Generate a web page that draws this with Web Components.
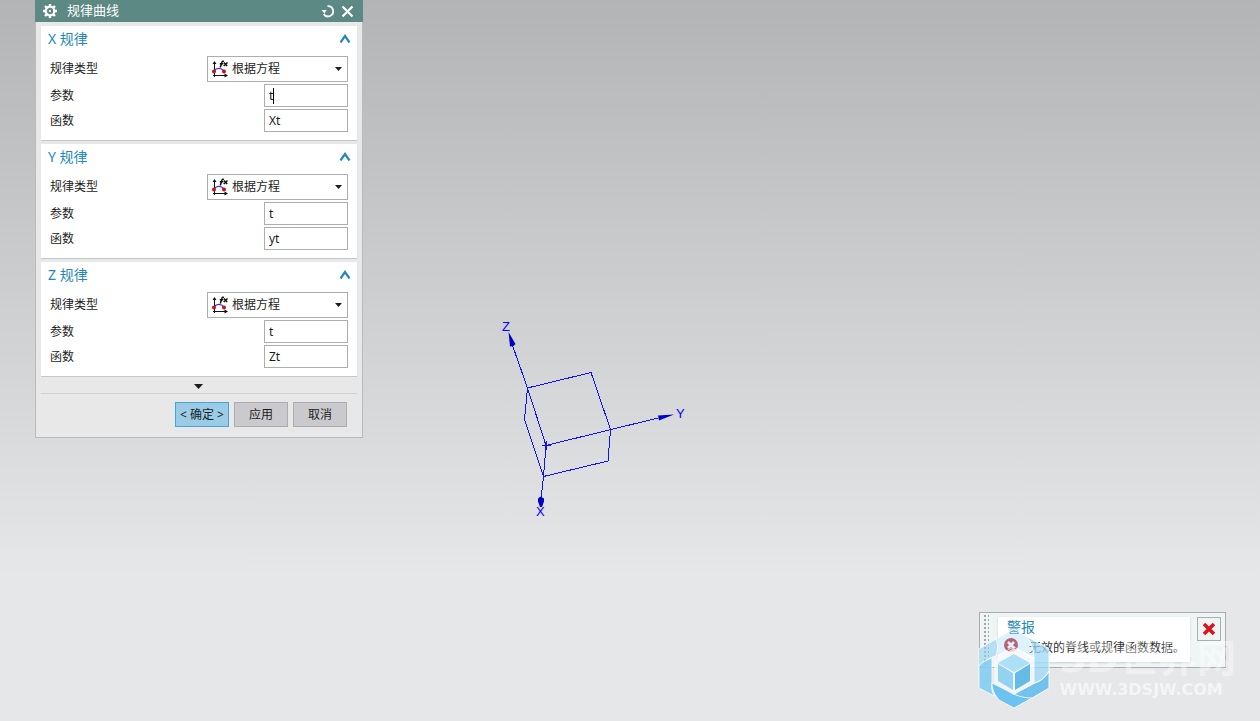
<!DOCTYPE html>
<html lang="zh-CN">
<head>
<meta charset="utf-8">
<title>规律曲线</title>
<style>
html, body { margin: 0; height: 100%; }
body { font: 12px/16px "Noto Sans", "Noto Sans CJK SC", sans-serif; color: #1c1c1c; overflow: hidden; }
</style>
</head>
<body>
<cad-viewport>
  <law-dialog heading="规律曲线">
    <law-section axis="X" variable="t" expression="Xt" active></law-section>
    <law-section axis="Y" variable="t" expression="yt"></law-section>
    <law-section axis="Z" variable="t" expression="Zt"></law-section>
  </law-dialog>
  <datum-axes></datum-axes>
  <alert-toast heading="警报">无效的脊线或规律函数数据。</alert-toast>
  <site-watermark></site-watermark>
</cad-viewport>
<script>
const make = (name, html, setup) => {
  const t = document.createElement('template');
  t.innerHTML = html;
  customElements.define(name, class extends HTMLElement {
    connectedCallback() {
      if (this.shadowRoot) return;
      const root = this.attachShadow({ mode: 'open' });
      root.append(t.content.cloneNode(true));
      if (setup) setup(this, root);
    }
  });
};

make('cad-viewport', `
<style>
:host { display: block; position: relative; width: 100%; height: 100%; overflow: hidden;
  background: linear-gradient(#b3b4b5 0%, #e6e7e9 80%, #e6e7e9 100%); }
::slotted(*) { position: absolute; }
::slotted(law-dialog) { left: 35px; top: 0; }
::slotted(datum-axes) { left: 490px; top: 310px; }
::slotted(alert-toast) { right: 34px; bottom: 53px; }
::slotted(site-watermark) { right: 24px; bottom: 12px; }
</style><slot></slot>`);

make('law-dialog', `
<style>
:host { display: block; width: 328px; box-sizing: border-box; background: #e8e8e8;
  border: 1px solid #b9babb; border-top: 0; }
header { display: flex; align-items: center; height: 22px; margin: 0 -1px; padding: 0 8px; background: #5c8984; color: #fff; }
h1 { flex: 1; margin: 0 0 2px 10px; font: inherit; font-size: 13px; line-height: 20px; }
header button { border: 0; padding: 0; background: none; width: 14px; height: 14px; margin-left: 6px; }
svg { display: block; }
.body { display: flex; flex-direction: column; gap: 3px; padding: 4px 5px 0; }
.more { display: flex; justify-content: center; align-items: flex-end; height: 16px; margin: 0 5px; border-bottom: 1px solid #d2d2d3; }
.more button { border: 0; padding: 0 2px 4px 0; background: none; }
footer { display: flex; justify-content: flex-end; gap: 5px; padding: 8px 15px 10px; }
footer button { box-sizing: border-box; width: 54px; height: 25px; padding: 0; border: 1px solid #adadaf; background: #cacace; font: inherit; color: inherit; white-space: nowrap; }
footer .ok { border-color: #4aa3d3; background: #9acce7; }
</style>
<header>
  <svg width="14" height="14" viewBox="0 0 14 14"><circle cx="7" cy="7" r="4.3" fill="none" stroke="#fff" stroke-width="2.2"/><path d="M7 0v2.5M7 11.5v2.5M0 7h2.5M11.5 7h2.5M2 2l1.7 1.7M10.3 10.3l1.7 1.7M12 2l-1.7 1.7M3.7 10.3l-1.7 1.700" stroke="#fff" stroke-width="2.4"/><circle cx="7" cy="7" r="1.1" fill="#fff"/></svg>
  <h1></h1>
  <button aria-label="重置"><svg width="14" height="14" viewBox="0 0 14 14"><path d="M7 2.200A5.100 5.100 0 1 1 2.400 9.500" fill="none" stroke="#fff" stroke-width="1.800" transform="rotate(-6 7 7)"/><path d="M0.500 6h5.500v-0.500l-2.500 4z" fill="#fff"/></svg></button>
  <button aria-label="关闭"><svg width="14" height="14" viewBox="0 0 14 14"><path d="M1.500 2.500l10 10M11.500 2.500l-10 10" stroke="#fff" stroke-width="2.200"/></svg></button>
</header>
<div class="body"><slot></slot></div>
<div class="more"><button aria-label="更多"><svg width="9" height="5"><path d="M0 0h9L4.500 5z" fill="#1c1c1c"/></svg></button></div>
<footer><button class="ok">&lt; 确定 &gt;</button><button>应用</button><button>取消</button></footer>`,
(el, root) => { root.querySelector('h1').textContent = el.getAttribute('heading'); });

make('law-section', `
<style>
:host { display: block; background: #fff; border-bottom: 1px solid #c6c6c7; padding: 0 9px 8px; }
.head { display: flex; justify-content: space-between; align-items: center; height: 30px; margin: 0 -4px 0 -2px; }
h2 { margin: 0 0 4px; font: inherit; font-size: 14px; line-height: 20px; color: #2588b8; }
.head button { border: 0; padding: 0 1px 6px 0; background: none; }
svg { display: block; }
.rows { display: grid; gap: 2px; }
.row { display: flex; justify-content: space-between; align-items: center; }
.pick, .field { position: relative; }
.pick svg { position: absolute; pointer-events: none; }
.pick .curve { left: 4px; top: 4px; }
.pick .drop { right: 6px; top: 11px; }
select { display: block; appearance: none; box-sizing: border-box; width: 141px; height: 26px; padding: 0 20px 0 24px; border: 1px solid #adadaf; border-radius: 0; background: #fff; font: inherit; color: inherit; }
input { display: block; box-sizing: border-box; width: 84px; height: 23px; padding: 0 4px; border: 1px solid #adadaf; border-radius: 0; background: #fff; font: inherit; color: inherit; outline: 0; }
:host([active]) .field.variable::after { content: ""; position: absolute; left: 9px; top: 4px; width: 1px; height: 16px; background: #000; }
</style>
<div class="head"><h2></h2><button aria-label="折叠"><svg width="12" height="9"><path d="M1.500 8.500L6 2l4.500 6.500" fill="none" stroke="#2588b8" stroke-width="2.200"/></svg></button></div>
<div class="rows">
  <div class="row"><label for="type">规律类型</label><div class="pick">
    <select id="type"><option>根据方程</option></select>
    <svg class="curve" width="18" height="18" viewBox="0 0 18 18"><path d="M3.500 17V3M2 15.500h13" stroke="#111" fill="none"/><path d="M1.500 4L3.500 1l2 3zM13.500 13.500l3.500 2-3.500 2z" fill="#111"/><path d="M3 11C5.500 7.500 10 7.500 13 11" fill="none" stroke="#3535e0" stroke-width="1.300"/><circle cx="3" cy="11.500" r="2" fill="#d00c18"/><circle cx="13" cy="11.500" r="2" fill="#d00c18"/><path d="M13 1.500c-1.500-.6-2 0-2.300 1.500L9.300 7.500M8.800 3.800h3.500M13 2.500l3.200 3.500M16.500 2.500l-3.800 3.500" fill="none" stroke="#111" stroke-width="1.500"/></svg>
    <svg class="drop" width="7" height="4"><path d="M0 0h7L3.500 4z" fill="#1c1c1c"/></svg></div></div>
  <div class="row"><label for="variable">参数</label><div class="field variable"><input id="variable"></div></div>
  <div class="row"><label for="expression">函数</label><div class="field"><input id="expression"></div></div>
</div>`,
(el, root) => {
  root.querySelector('h2').textContent = el.getAttribute('axis') + ' 规律';
  for (const k of ['variable', 'expression']) root.getElementById(k).setAttribute('value', el.getAttribute(k));
});

make('datum-axes', `
<style>:host { display: block; } svg { display: block; } text { font: 13px "Liberation Sans", sans-serif; fill: #00f; }</style>
<svg width="210" height="220" viewBox="0 0 210 220">
  <g fill="none" stroke="#1212f0" stroke-width="1" shape-rendering="crispEdges">
    <path d="M37.500 78L101 62.500 120.500 119.500 118 151 53.500 166.500 34.500 109.500 37.500 78 56 135.500 168 108M22 34L37.500 78M56 135.500L53.500 166.500 51 190"/>
    <path d="M51.500 135.500h9M56.500 131v9"/>
  </g>
  <path d="M18.500 22l7 12-2 2-3.500.500zM184 104.500l-15 6-1-5zM48 188.500l2.500-2 3.500 2v3l-2 5.500h-2l-2-5.500z" fill="#0000c4"/>
  <text x="12" y="21">Z</text><text x="186" y="108">Y</text><text x="46" y="206">X</text>
</svg>`);

make('alert-toast', `
<style>
:host { display: flex; align-items: flex-start; box-sizing: border-box; width: 247px; height: 56px; padding: 4px; border: 1px solid #adadaf; background: #eff5f5; }
.grip { width: 7px; height: 50px; margin: -2px 0 0 -2px; background: conic-gradient(#a2a6a8 25%, transparent 0) 0 0 / 4px 4px; }
.card { flex: 1; height: 45px; margin-left: 9px; background: #fff; box-shadow: 0 1px 2px #c8cccc; }
h2 { margin: 0 0 0 9px; font: inherit; font-size: 14px; line-height: 20px; color: #2588b8; }
p { display: flex; align-items: flex-start; gap: 10px; margin: 0 0 0 5px; white-space: nowrap; color: #333; }
p span { padding-top: 3px; }
.close { width: 24px; height: 24px; margin-left: 7px; padding: 0; border: 1px solid #adadaf; background: #eff5f5; display: grid; place-items: center; }
svg { display: block; flex: none; }
</style>
<div class="grip"></div>
<div class="card"><h2></h2><p><svg width="16" height="16" viewBox="0 0 16 16"><circle cx="8" cy="8" r="7" fill="#c4182a"/><path d="M5 5l6 6M11 5l-6 6" stroke="#fff" stroke-width="2.500"/></svg><span><slot></slot></span></p></div>
<button class="close" aria-label="关闭"><svg width="14" height="14" viewBox="0 0 14 14"><path d="M2 2l10 10M12 2L2 12" stroke="#d8141c" stroke-width="3.500"/></svg></button>`,
(el, root) => { root.querySelector('h2').textContent = el.getAttribute('heading'); });

make('site-watermark', `
<style>
:host { display: flex; align-items: flex-end; gap: 9px; color: #fff; pointer-events: none; }
svg { display: block; }
.name { font: bold 39px/44px "DejaVu Sans", "Noto Sans CJK SC", sans-serif; opacity: .4; white-space: nowrap; }
.url { font: bold 16px/18px "DejaVu Sans", sans-serif; opacity: .6; }
.words { padding-bottom: 10px; }
</style>
<svg width="72" height="81" viewBox="0 0 72 81">
  <g stroke="#fff" stroke-opacity=".8" stroke-width="1">
    <path d="M36 1L18 11c2 5 2 10 0 17l18-9 20 11c0-8-3-15-8-22z" fill="#a5ddf8" fill-opacity=".38"/>
    <path d="M18 11L1 21v17C7 32 13 29 18 28c2-7 2-12 0-17z" fill="#8ed0f2" fill-opacity=".6"/>
    <path d="M1 38v22l15 8c-2-5-3-8-2-13V30C8 32 4 34 1 38z" fill="#84cdf2" fill-opacity=".9"/>
    <path d="M14 55c0 7 3 12 7 17l15 8 18-10c-6-1-12-2-18-4z" fill="#66c0ef" fill-opacity=".95"/>
    <path d="M36 66c6 3 12 4 18 4l17-10V43c-3 6-8 10-14 12z" fill="#6cc0ed" fill-opacity=".95"/>
    <path d="M48 8c5 6 8 13 8 22v25c7-2 11-6 15-12V21z" fill="#9bd8f6" fill-opacity=".75"/>
  </g>
  <path d="M36 20l20 11v24L36 67 16 55V31z" fill="#f4f8fa" opacity=".85"/>
  <path d="M36 26l16 9-16 9-16-9z" fill="#addff7"/><path d="M20 36l15 9v17l-15-9z" fill="#94d2f1"/><path d="M52 36l-15 9v17l15-9z" fill="#66bbe6"/>
</svg>
<div class="words"><div class="name">3D世界网</div><div class="url">WWW.3DSJW.COM</div></div>`);
</script>
</body>
</html>
